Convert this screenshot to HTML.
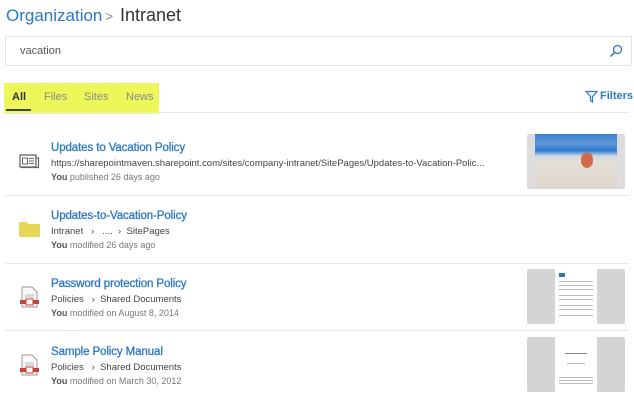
<!DOCTYPE html>
<html><head><meta charset="utf-8"><style>
*{margin:0;padding:0;box-sizing:border-box}
body{width:634px;height:402px;background:#fff;font-family:"Liberation Sans",sans-serif;position:relative;overflow:hidden;color:#333}
.a{position:absolute;white-space:nowrap}
.t{color:#2b78c5;font-size:11.5px;letter-spacing:-0.1px;-webkit-text-stroke:0.3px #2b78c5}
.p{font-size:9.5px;color:#444}
.m{font-size:9px;color:#777}
.m b{color:#555}
.sep{position:absolute;left:5px;right:5px;height:1px;background:#e8e8e8}
.thumb{position:absolute;left:527px;width:98px;height:55px;background:#d4d4d4;border-radius:2px}
.pg{position:absolute;left:28px;width:42px;top:0;bottom:0;background:#fff}
.ln{position:absolute;left:4px;right:4px;height:1px;background:#bbb}
</style></head><body>
<div class="a" style="left:6px;top:6px;font-size:17px;color:#2b78c5">Organization</div>
<div class="a" style="left:105px;top:8px;font-size:14px;color:#888">&gt;</div>
<div class="a" style="left:120px;top:5px;font-size:18px;color:#333">Intranet</div>
<div class="a" style="left:5px;top:36px;width:627px;height:30px;border:1px solid #e3e3e3"></div>
<div class="a" style="left:20px;top:45px;font-size:11px;color:#555">vacation</div>
<svg class="a" style="left:609px;top:44px" width="14" height="14" viewBox="0 0 14 14"><circle cx="8.5" cy="5.5" r="4" fill="none" stroke="#2b78c5" stroke-width="1.3"/><line x1="5.5" y1="8.5" x2="1.5" y2="12.5" stroke="#2b78c5" stroke-width="1.5"/></svg>
<div class="a" style="left:4px;top:83px;width:155px;height:31px;background:#eef75a"></div>
<div class="a" style="left:12px;top:91px;font-size:11px;font-weight:bold;color:#333">All</div>
<div class="a" style="left:6px;top:109px;width:25px;height:2px;background:#444"></div>
<div class="a" style="left:44px;top:91px;font-size:11px;color:#888">Files</div>
<div class="a" style="left:84px;top:91px;font-size:11px;color:#888">Sites</div>
<div class="a" style="left:126px;top:91px;font-size:11px;color:#888">News</div>
<svg class="a" style="left:585px;top:90px" width="13" height="13" viewBox="0 0 13 13"><path d="M1 1.5H12L7.5 6.5V12L5.5 10.5V6.5Z" fill="none" stroke="#2b78c5" stroke-width="1.2"/></svg>
<div class="a" style="left:600px;top:90px;font-size:11px;font-weight:bold;color:#2b78c5">Filters</div>
<div class="sep" style="top:112px"></div>

<svg class="a" style="left:19px;top:154px" width="21" height="15" viewBox="0 0 21 15"><rect x="1" y="1" width="16" height="12" fill="none" stroke="#666" stroke-width="1.3"/><path d="M17 4H19.5V13.5H2" fill="none" stroke="#666" stroke-width="1.2"/><rect x="3.5" y="4" width="5" height="6" fill="none" stroke="#666"/><path d="M10 4.5H15M10 7H15M10 9.5H15" stroke="#666"/></svg>
<div class="a t" style="left:51px;top:142px">Updates to Vacation Policy</div>
<div class="a p" style="left:51px;top:158px">https://sharepointmaven.sharepoint.com/sites/company-intranet/SitePages/Updates-to-Vacation-Polic...</div>
<div class="a m" style="left:51px;top:172px"><b>You</b> published 26 days ago</div>
<div class="thumb" style="top:134px;background:#dcdcdc"><div style="position:absolute;left:8px;right:8px;top:0;bottom:0;background:linear-gradient(#3d7fd0 0,#5f97d8 18%,#2a7ad0 30%,#c9d8e2 40%,#e5e0d8 50%,#ddd6cc 100%)"></div><div style="position:absolute;left:54px;top:19px;width:12px;height:15px;background:#d06a4a;border-radius:40% 40% 50% 50%"></div></div>
<div class="sep" style="top:195px"></div>

<svg class="a" style="left:19px;top:222px" width="21" height="15" viewBox="0 0 21 15"><path d="M0 0H8L9 2H21V15H0Z" fill="#e6d856"/></svg>
<div class="a t" style="left:51px;top:210px">Updates-to-Vacation-Policy</div>
<div class="a p" style="left:51px;top:226px">Intranet &nbsp;&nbsp;›&nbsp;&nbsp; .... &nbsp;›&nbsp; SitePages</div>
<div class="a m" style="left:51px;top:240px"><b>You</b> modified 26 days ago</div>
<div class="sep" style="top:263px"></div>

<svg class="a" style="left:20px;top:286px" width="19" height="22" viewBox="0 0 19 22"><path d="M2 1H12L17 6V21H2Z" fill="#fafafa" stroke="#999"/><path d="M5 9H14M5 11H14" stroke="#bbb"/><rect x="0" y="14" width="19" height="4" fill="#c8433a"/><rect x="6" y="13" width="7" height="6" fill="#fff" stroke="#c8433a"/></svg>
<div class="a t" style="left:51px;top:278px">Password protection Policy</div>
<div class="a p" style="left:51px;top:294px">Policies &nbsp;&nbsp;›&nbsp; Shared Documents</div>
<div class="a m" style="left:51px;top:308px"><b>You</b> modified on August 8, 2014</div>
<div class="thumb" style="top:269px"><div class="pg"><div style="position:absolute;left:4px;top:4px;width:6px;height:4px;background:#3a6fb0"></div><div class="ln" style="top:12px"></div><div class="ln" style="top:16px"></div><div class="ln" style="top:20px"></div><div class="ln" style="top:26px"></div><div class="ln" style="top:30px"></div><div class="ln" style="top:36px"></div><div class="ln" style="top:40px"></div><div class="ln" style="top:46px"></div></div></div>
<div class="sep" style="top:330px"></div>

<svg class="a" style="left:20px;top:354px" width="19" height="22" viewBox="0 0 19 22"><path d="M2 1H12L17 6V21H2Z" fill="#fafafa" stroke="#999"/><path d="M5 9H14M5 11H14" stroke="#bbb"/><rect x="0" y="14" width="19" height="4" fill="#c8433a"/><rect x="6" y="13" width="7" height="6" fill="#fff" stroke="#c8433a"/></svg>
<div class="a t" style="left:51px;top:346px">Sample Policy Manual</div>
<div class="a p" style="left:51px;top:362px">Policies &nbsp;&nbsp;›&nbsp; Shared Documents</div>
<div class="a m" style="left:51px;top:376px"><b>You</b> modified on March 30, 2012</div>
<div class="thumb" style="top:337px"><div class="pg"><div class="ln" style="top:16px;left:10px;right:10px;background:#888"></div><div class="ln" style="top:26px;left:12px;right:12px"></div><div class="ln" style="top:40px"></div><div class="ln" style="top:43px"></div><div class="ln" style="top:46px"></div></div></div>
</body></html>
